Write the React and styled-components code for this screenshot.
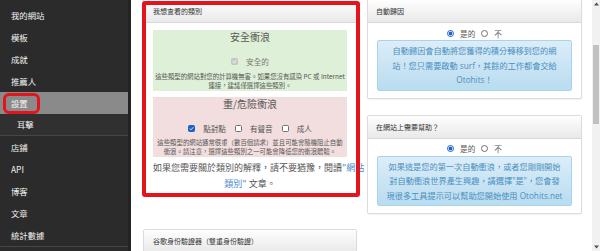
import React from "react";
import styled, { createGlobalStyle, css } from "styled-components";

const GlobalStyle = createGlobalStyle`
  html, body {
    margin: 0;
    padding: 0;
    background: #fff;
  }
  body {
    font-family: "Open Sans", "Noto Sans CJK TC", sans-serif;
    color: #555;
  }
`;

const Page = styled.div`
  display: flex;
  width: 600px;
  height: 251px;
  overflow: hidden;
`;

/* ---------- sidebar ---------- */

const Sidebar = styled.nav`
  width: 128px;
  flex-shrink: 0;
  background: #2b2b2b;
  border-right: 3px solid #232323;
  padding-top: 4px;
  display: flex;
  flex-direction: column;
`;

const NavItem = styled.div`
  position: relative;
  height: 22px;
  line-height: 22px;
  padding-left: ${(p) => (p.$sub ? "17px" : "11px")};
  font-family: "Noto Sans CJK TC", sans-serif;
  font-size: 8.4px;
  color: #f2f2f2;
  background: ${(p) => (p.$active ? "#8a8a8a" : p.$sub ? "#303030" : "transparent")};
  ${(p) =>
    p.$divider &&
    css`
      border-bottom: 1px solid #464646;
    `}
  ${(p) =>
    p.$sub &&
    css`
      height: 21px;
      line-height: 21px;
    `}
`;

const MarkRing = styled.span`
  position: absolute;
  left: 3px;
  top: 1px;
  width: 31px;
  height: 15px;
  border: 3px solid #e3141c;
  border-radius: 6px;
`;

/* ---------- main area ---------- */

const Main = styled.main`
  flex: 1;
  display: flex;
  align-items: flex-start;
  gap: 10px;
  padding: 0 10px 0 12px;
  margin-top: -1px;
`;

const Column = styled.div`
  width: ${(p) => p.$w}px;
  flex-shrink: 0;
  display: flex;
  flex-direction: column;
`;

const Card = styled.section`
  position: relative;
  background: #fff;
  border: 1px solid #dcdcdc;
  border-radius: 2px;
  box-shadow: 0 1px 2px rgba(0, 0, 0, 0.06);
  margin-top: ${(p) => p.$gap || 0}px;
  ${(p) =>
    p.$highlight &&
    css`
      &::after {
        content: "";
        position: absolute;
        top: 1px;
        left: -2px;
        right: -4px;
        bottom: -4px;
        border: 4px solid #e3141c;
        border-radius: 3px;
        pointer-events: none;
      }
    `}
`;

const CardHeader = styled.header`
  height: 22px;
  line-height: 22px;
  padding-left: ${(p) => p.$pad || 8}px;
  font-family: "Noto Sans CJK TC", sans-serif;
  font-size: 7px;
  color: #333;
  background: linear-gradient(#fefefe, #e9e9e9);
  border-bottom: 1px solid #d8d8d8;
`;

const CardBody = styled.div`
  padding: ${(p) => p.$pad || "4px 9px 7px"};
`;

/* ---------- category card ---------- */

const Zone = styled.div`
  background: ${(p) => (p.$tone === "danger" ? "#f2dede" : "#dff0d8")};
  text-align: center;
  padding: 0 2px 1px;
  margin-top: ${(p) => p.$gap || 0}px;
`;

const ZoneTitle = styled.div`
  font-family: "Noto Sans CJK TC", sans-serif;
  font-size: 10px;
  line-height: 14px;
  color: #5a5a5a;
`;

const CheckRow = styled.div`
  display: flex;
  justify-content: center;
  align-items: center;
  height: 12px;
  margin-top: 11px;
  font-family: "Noto Sans CJK TC", sans-serif;
  font-size: 7.6px;
  color: #555;
`;

const CheckLabel = styled.label`
  display: flex;
  align-items: center;
  gap: 8px;
  margin: 0 4.5px;
  color: ${(p) => (p.$muted ? "#777" : "#555")};
`;

const Box = styled.span`
  width: 7px;
  height: 7px;
  box-sizing: border-box;
  border-radius: 1.5px;
  display: inline-flex;
  align-items: center;
  justify-content: center;
  border: 1px solid ${(p) => (p.$disabled ? "#c4c4c4" : p.$checked ? "#1b62c9" : "#6f6f6f")};
  background: ${(p) => (p.$disabled ? "#c9c9c9" : p.$checked ? "#1b62c9" : "#fff")};
`;

const Note = styled.div`
  margin-top: ${(p) => p.$gap}px;
  font-family: "Noto Sans CJK TC", sans-serif;
  font-size: 6.4px;
  line-height: 9px;
  color: #555;
  white-space: nowrap;
`;

const Explain = styled.p`
  margin: 3px 0 0;
  text-align: center;
  font-family: "Noto Sans CJK TC", sans-serif;
  font-size: 9px;
  line-height: 16px;
  color: #555;
  white-space: nowrap;
`;

const Link = styled.a`
  color: #4a8ccc;
  text-decoration: none;
`;

const AuthStub = styled.div`
  width: 80px;
  height: 3px;
  margin: 0 auto;
  background: #cfe3f5;
`;

/* ---------- toggle cards ---------- */

const RadioRow = styled.div`
  display: flex;
  justify-content: center;
  align-items: center;
  height: 12px;
  gap: 6px;
  font-family: "Noto Sans CJK TC", sans-serif;
  font-size: 7.6px;
  color: #555;
`;

const RadioLabel = styled.label`
  display: flex;
  align-items: center;
  gap: 6px;
`;

const Radio = styled.span`
  width: 7px;
  height: 7px;
  box-sizing: border-box;
  border-radius: 50%;
  border: 1px solid ${(p) => (p.$on ? "#1b62c9" : "#6f6f6f")};
  background: ${(p) =>
    p.$on ? "radial-gradient(circle, #1b62c9 0 1.8px, #fff 2.1px)" : "#fff"};
`;

const InfoBox = styled.div`
  margin-top: 1px;
  padding: 3px 4px 2px;
  border: 1px solid #a9d4ec;
  border-radius: 2px;
  background: linear-gradient(#dcedf8, #b8dcf0);
  text-align: center;
  font-family: "Open Sans", "Noto Sans CJK TC", sans-serif;
  font-size: 8.2px;
  line-height: 14.5px;
  color: #4a8fbf;
  white-space: nowrap;
`;

/* ---------- fake scrollbar ---------- */

const Scrollbar = styled.div`
  width: 8px;
  flex-shrink: 0;
  background: #f1f1f1;
  display: flex;
  flex-direction: column;
  align-items: center;
  justify-content: space-between;
  padding: 2px 0;
  box-sizing: border-box;
`;

const Thumb = styled.div`
  width: 6px;
  height: 79px;
  background: #c1c1c1;
  margin-bottom: auto;
  margin-top: 39px;
`;

const Arrow = ({ down }) => (
  <svg width="5" height="4" viewBox="0 0 5 4">
    <path d={down ? "M0 0.5h5L2.5 3.5z" : "M0 3.5h5L2.5 0.5z"} fill="#505050" />
  </svg>
);

const Check = ({ checked, disabled }) => (
  <Box $checked={checked} $disabled={disabled}>
    {(checked || disabled) && (
      <svg width="5" height="5" viewBox="0 0 10 10">
        <path d="M1.5 5.2l2.4 2.4L8.6 2.6" stroke="#fff" strokeWidth="1.8" fill="none" />
      </svg>
    )}
  </Box>
);

const navItems = [
  { label: "我的網站" },
  { label: "模板" },
  { label: "成就" },
  { label: "推薦人" },
  { label: "設置", active: true },
  { label: "耳擊", sub: true, divider: true },
  { label: "店鋪" },
  { label: "API" },
  { label: "博客" },
  { label: "文章" },
  { label: "統計數據", divider: true },
];

const ToggleCard = ({ title, gap, children }) => (
  <Card $gap={gap}>
    <CardHeader>{title}</CardHeader>
    <CardBody>
      <RadioRow>
        <RadioLabel>
          <Radio $on />
          是的
        </RadioLabel>
        <RadioLabel>
          <Radio />
          不
        </RadioLabel>
      </RadioRow>
      <InfoBox>{children}</InfoBox>
    </CardBody>
  </Card>
);

export default function App() {
  return (
    <>
      <GlobalStyle />
      <Page>
        <Sidebar>
          {navItems.map((item) => (
            <NavItem
              key={item.label}
              $active={item.active}
              $sub={item.sub}
              $divider={item.divider}
            >
              {item.label}
              {item.active && <MarkRing />}
            </NavItem>
          ))}
        </Sidebar>

        <Main>
          <Column $w={214}>
            <Card $highlight>
              <CardHeader $pad={9}>我想查看的類別</CardHeader>
              <CardBody $pad="7px 9px 1px">
                <Zone>
                  <ZoneTitle>安全衝浪</ZoneTitle>
                  <CheckRow>
                    <CheckLabel $muted>
                      <Check disabled />
                      安全的
                    </CheckLabel>
                  </CheckRow>
                  <Note $gap={5}>
                    這些類型的網站對您的計算機無害。如果您沒有感染 PC 或 Internet
                    <br />
                    連接，建議僅選擇這些類別。
                  </Note>
                </Zone>
                <Zone $tone="danger" $gap={6}>
                  <ZoneTitle>重/危險衝浪</ZoneTitle>
                  <CheckRow>
                    <CheckLabel>
                      <Check checked />
                      點對點
                    </CheckLabel>
                    <CheckLabel>
                      <Check />
                      有聲音
                    </CheckLabel>
                    <CheckLabel>
                      <Check />
                      成人
                    </CheckLabel>
                  </CheckRow>
                  <Note $gap={4}>
                    這些類型的網站通常很重（數百個請求）並且可能會隨機阻止自動
                    <br />
                    衝浪。請注意，選擇這些類別之一可能會降低您的衝浪體驗。
                  </Note>
                </Zone>
                <Explain>
                  如果您需要關於類別的解釋，請不要猶豫，閱讀
                  <Link href="#">
                    "網站
                    <br />
                    類別"
                  </Link>{" "}
                  文章。
                </Explain>
              </CardBody>
            </Card>

            <Card $gap={35}>
              <CardHeader $pad={9}>谷歌身份驗證器（雙重身份驗證）</CardHeader>
              <AuthStub />
            </Card>
          </Column>

          <Column $w={215}>
            <ToggleCard title="自動歸因">
              自動歸因會自動將您獲得的積分轉移到您的網
              <br />
              站！您只需要啟動 surf，其餘的工作都會交給
              <br />
              Otohits！
            </ToggleCard>
            <ToggleCard title="在網站上需要幫助？" gap={16}>
              如果這是您的第一次自動衝浪，或者您剛剛開始
              <br />
              對自動衝浪世界產生興趣，請選擇"是"，您會發
              <br />
              現很多工具提示可以幫助您開始使用 Otohits.net
            </ToggleCard>
          </Column>
        </Main>

        <Scrollbar>
          <Arrow />
          <Thumb />
          <Arrow down />
        </Scrollbar>
      </Page>
    </>
  );
}
